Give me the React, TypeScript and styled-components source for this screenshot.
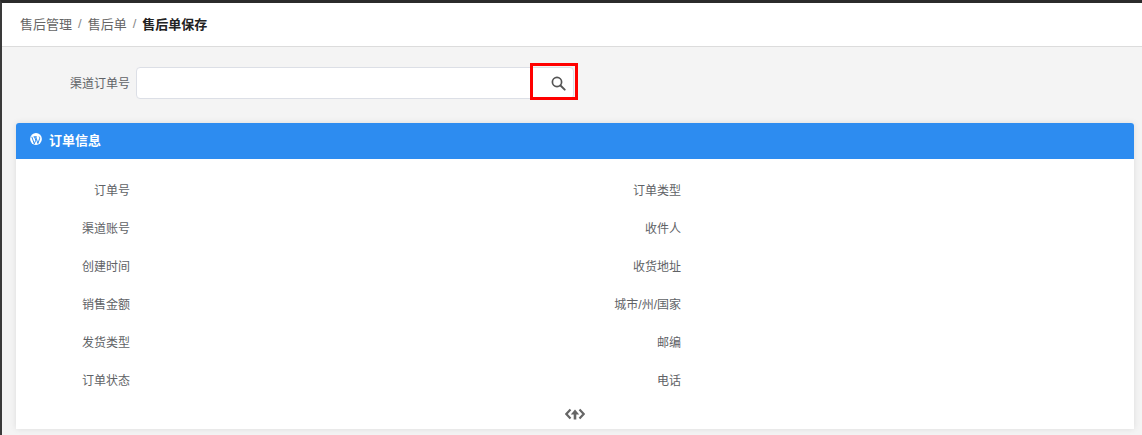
import React from "react";
import styled, { createGlobalStyle } from "styled-components";

const Global = createGlobalStyle`
  html, body { margin: 0; padding: 0; height: 100%; background: #f4f4f4; overflow: hidden; }
  body { font-family: "Liberation Sans", "Noto Sans CJK SC", sans-serif; font-size: 12px; color: #555; }
  * { box-sizing: border-box; }
`;

const Page = styled.div`
  width: 1142px;
  height: 435px;
  display: flex;
  flex-direction: column;
  border-top: 3px solid #2b2b2b;
  border-left: 2px solid #3a3a3a;
  background: #f4f4f4;
  overflow: hidden;
`;

const Breadcrumbs = styled.nav`
  height: 44px;
  flex: none;
  display: flex;
  align-items: center;
  padding: 0 0 2px 18px;
  background: #fff;
  border-bottom: 1px solid #dcdcdc;
  font-size: 13px;
  color: #666;
`;

const Crumb = styled.span<{ $current?: boolean }>`
  color: ${(p) => (p.$current ? "#222" : "#666")};
  font-weight: ${(p) => (p.$current ? 700 : 400)};
`;

const Slash = styled.span`
  margin: 0 6px;
  color: #888;
`;

const SearchRow = styled.div`
  display: flex;
  align-items: center;
  height: 76px;
  flex: none;
  padding-bottom: 4px;
`;

const SearchLabel = styled.label`
  width: 134px;
  text-align: right;
  padding-right: 6px;
  padding-bottom: 2px;
  color: #606266;
`;

const SearchBox = styled.div`
  width: 438px;
  height: 32px;
  display: flex;
  background: #fff;
  border: 1px solid #dcdfe6;
  border-radius: 4px;
`;

const SearchInput = styled.input`
  flex: 1;
  min-width: 0;
  border: 0;
  outline: 0;
  background: transparent;
`;

const SearchButton = styled.button`
  width: 48px;
  height: 37px;
  margin: -5px -5px 0 0;
  flex: none;
  display: flex;
  align-items: center;
  justify-content: center;
  padding: 3px 0 0 9px;
  background: transparent;
  border: 3px solid #f00;
`;

const Card = styled.section`
  width: 1118px;
  margin-left: 14px;
  flex: none;
  background: #fff;
  border-radius: 3px 3px 0 0;
  box-shadow: 0 0 6px rgba(0, 0, 0, 0.1);
`;

const CardHeader = styled.header`
  height: 36px;
  display: flex;
  align-items: center;
  gap: 7px;
  padding: 0 0 4px 14px;
  background: #2d8cf0;
  border-radius: 3px 3px 0 0;
  color: #fff;
  font-size: 13px;
  font-weight: 700;
`;

const Fields = styled.div`
  display: grid;
  grid-template-columns: 540px 1fr;
  padding-top: 12px;
`;

const Field = styled.div`
  height: 38px;
  display: flex;
  align-items: center;
  padding-bottom: 1px;
`;

const FieldLabel = styled.span<{ $width: number }>`
  width: ${(p) => p.$width}px;
  text-align: right;
  color: #606266;
`;

const Toggle = styled.div`
  height: 30px;
  display: flex;
  justify-content: center;
  padding-top: 9px;
`;

const WpIcon = () => (
  <svg width="12" height="12" viewBox="0 0 12 12" aria-hidden="true">
    <circle cx="6" cy="6" r="5.9" fill="#fff" />
    <path d="M1.8 3.8 4.3 10.8l1.5-3.6L4.5 3.8M3.6 3.8h3.2M5.7 3.8l2.2 6.7 1.6-4.6c.4-1 .1-1.6-.4-2.3" fill="none" stroke="#2d8cf0" strokeWidth="1" />
  </svg>
);

const SearchIcon = () => (
  <svg width="15" height="15" viewBox="0 0 15 15" aria-hidden="true">
    <circle cx="6" cy="6" r="4.6" fill="none" stroke="#555" strokeWidth="1.7" />
    <path d="M9.5 9.5l4.2 4.2" stroke="#555" strokeWidth="1.9" strokeLinecap="round" />
  </svg>
);

const CollapseIcon = () => (
  <svg width="20" height="12" viewBox="0 0 20 12" aria-hidden="true">
    <path d="M5.5 1.5 1.3 6l4.2 4.5M14.5 1.5l4.2 4.5-4.2 4.5" fill="none" stroke="#666" strokeWidth="2.2" />
    <path d="M10 11.5V4" fill="none" stroke="#666" strokeWidth="2.6" />
    <path d="M5.8 6.5 10 1.5l4.2 5z" fill="#666" />
  </svg>
);

const left = ["订单号", "渠道账号", "创建时间", "销售金额", "发货类型", "订单状态"];
const right = ["订单类型", "收件人", "收货地址", "城市/州/国家", "邮编", "电话"];

export default function App() {
  return (
    <Page>
      <Global />
      <Breadcrumbs>
        <Crumb>售后管理</Crumb>
        <Slash>/</Slash>
        <Crumb>售后单</Crumb>
        <Slash>/</Slash>
        <Crumb $current>售后单保存</Crumb>
      </Breadcrumbs>
      <SearchRow>
        <SearchLabel>渠道订单号</SearchLabel>
        <SearchBox>
          <SearchInput />
          <SearchButton aria-label="搜索">
            <SearchIcon />
          </SearchButton>
        </SearchBox>
      </SearchRow>
      <Card>
        <CardHeader>
          <WpIcon />
          订单信息
        </CardHeader>
        <Fields>
          {left.map((l, i) => (
            <React.Fragment key={l}>
              <Field>
                <FieldLabel $width={114}>{l}</FieldLabel>
              </Field>
              <Field>
                <FieldLabel $width={125}>{right[i]}</FieldLabel>
              </Field>
            </React.Fragment>
          ))}
        </Fields>
        <Toggle>
          <CollapseIcon />
        </Toggle>
      </Card>
    </Page>
  );
}
